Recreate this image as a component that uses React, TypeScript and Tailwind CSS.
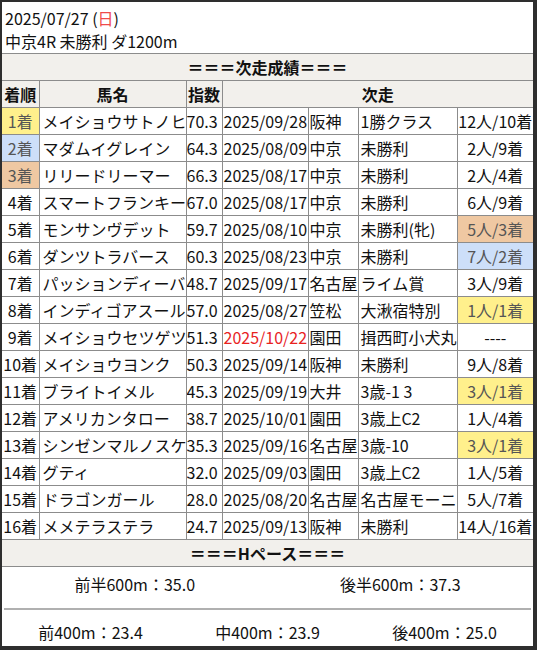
type Row = {
  rank: string;
  name: string;
  idx: string;
  date: string;
  place: string;
  race: string;
  result: string;
  rankBg?: string;
  resBg?: string;
  dateRed?: boolean;
};

const YELLOW = "bg-[#fff08c] text-[#555]";
const BLUE = "bg-[#cddff9] text-[#555]";
const ORANGE = "bg-[#efc8a2] text-[#555]";

const rows: Row[] = [
  { rank: "1着", name: "メイショウサトノヒ", idx: "70.3", date: "2025/09/28", place: "阪神", race: "1勝クラス", result: "12人/10着", rankBg: YELLOW },
  { rank: "2着", name: "マダムイグレイン", idx: "64.3", date: "2025/08/09", place: "中京", race: "未勝利", result: "2人/9着", rankBg: BLUE },
  { rank: "3着", name: "リリードリーマー", idx: "66.3", date: "2025/08/17", place: "中京", race: "未勝利", result: "2人/4着", rankBg: ORANGE },
  { rank: "4着", name: "スマートフランキー", idx: "67.0", date: "2025/08/17", place: "中京", race: "未勝利", result: "6人/9着" },
  { rank: "5着", name: "モンサンヴデット", idx: "59.7", date: "2025/08/10", place: "中京", race: "未勝利(牝)", result: "5人/3着", resBg: ORANGE },
  { rank: "6着", name: "ダンツトラバース", idx: "60.3", date: "2025/08/23", place: "中京", race: "未勝利", result: "7人/2着", resBg: BLUE },
  { rank: "7着", name: "パッションディーバ", idx: "48.7", date: "2025/09/17", place: "名古屋", race: "ライム賞", result: "3人/9着" },
  { rank: "8着", name: "インディゴアスール", idx: "57.0", date: "2025/08/27", place: "笠松", race: "大湫宿特別", result: "1人/1着", resBg: YELLOW },
  { rank: "9着", name: "メイショウセツゲツ", idx: "51.3", date: "2025/10/22", place: "園田", race: "揖西町小犬丸", result: "----", dateRed: true },
  { rank: "10着", name: "メイショウヨンク", idx: "50.3", date: "2025/09/14", place: "阪神", race: "未勝利", result: "9人/8着" },
  { rank: "11着", name: "ブライトイメル", idx: "45.3", date: "2025/09/19", place: "大井", race: "3歳-1 3", result: "3人/1着", resBg: YELLOW },
  { rank: "12着", name: "アメリカンタロー", idx: "38.7", date: "2025/10/01", place: "園田", race: "3歳上C2", result: "1人/4着" },
  { rank: "13着", name: "シンゼンマルノスケ", idx: "35.3", date: "2025/09/16", place: "名古屋", race: "3歳-10", result: "3人/1着", resBg: YELLOW },
  { rank: "14着", name: "グティ", idx: "32.0", date: "2025/09/03", place: "園田", race: "3歳上C2", result: "1人/5着" },
  { rank: "15着", name: "ドラゴンガール", idx: "28.0", date: "2025/08/20", place: "名古屋", race: "名古屋モーニ", result: "5人/7着" },
  { rank: "16着", name: "メメテラステラ", idx: "24.7", date: "2025/09/13", place: "阪神", race: "未勝利", result: "14人/16着" },
];

const cell = "border border-[#8c8c8c] h-[27px] py-0 leading-[24px] whitespace-nowrap overflow-hidden";

export default function App() {
  return (
    <div
      className="w-[537px] h-[650px] bg-[#2e2e2e] pl-[2px] pt-[2px] pr-[4px] pb-[4px] text-[16px] text-[#111]"
      style={{ fontFamily: '"Noto Sans CJK JP", "Noto Sans", sans-serif' }}
    >
      <div className="h-full bg-white flex flex-col overflow-hidden">
        <div className="pt-[5px] pl-[3px] leading-[23px] h-[51px]">
          <div>
            2025/07/27 (<span className="text-[#ef4b4b]">日</span>)
          </div>
          <div>中京4R 未勝利 ダ1200m</div>
        </div>
        <table className="w-full table-fixed border-collapse">
          <colgroup>
            <col className="w-[37px]" />
            <col className="w-[147px]" />
            <col className="w-[36px]" />
            <col className="w-[86px]" />
            <col className="w-[50px]" />
            <col className="w-[99px]" />
            <col />
          </colgroup>
          <thead>
            <tr>
              <th colSpan={7} className={`${cell} border-x-0 bg-[#f2f0ec] font-bold text-center`}>
                ＝＝＝次走成績＝＝＝
              </th>
            </tr>
            <tr className="bg-[#f2f0ec] font-bold">
              <th className={`${cell} border-l-0 text-center px-0`}>着順</th>
              <th className={`${cell} text-center`}>馬名</th>
              <th className={`${cell} text-center px-0`}>指数</th>
              <th colSpan={4} className={`${cell} border-r-0 text-center`}>次走</th>
            </tr>
          </thead>
          <tbody>
            {rows.map((r) => (
              <tr key={r.rank}>
                <td className={`${cell} border-l-0 text-center px-0 ${r.rankBg ?? ""}`}>{r.rank}</td>
                <td className={`${cell} pl-[3px] pr-0 text-left`}>{r.name}</td>
                <td className={`${cell} px-0 text-left`}>{r.idx}</td>
                <td className={`${cell} pl-[1px] pr-0 ${r.dateRed ? "text-[#e8231f]" : ""}`}>{r.date}</td>
                <td className={`${cell} pl-[1px] pr-0`}>{r.place}</td>
                <td className={`${cell} pl-[2px] pr-0`}>{r.race}</td>
                <td className={`${cell} border-r-0 text-center px-0 ${r.resBg ?? ""}`}>{r.result}</td>
              </tr>
            ))}
            <tr>
              <td colSpan={7} className={`${cell} border-x-0 bg-[#f2f0ec] font-bold text-center`}>
                ＝＝＝Hペース＝＝＝
              </td>
            </tr>
          </tbody>
        </table>
        <div className="grid grid-cols-2 h-[34px] items-center text-center leading-[24px]">
          <div>前半600m：35.0</div>
          <div>後半600m：37.3</div>
        </div>
        <div className="mt-[7px] mx-[2px] h-[2px] bg-[#b0b0b0]" />
        <div className="grid grid-cols-3 pt-[10px] text-center leading-[24px]">
          <div>前400m：23.4</div>
          <div>中400m：23.9</div>
          <div>後400m：25.0</div>
        </div>
      </div>
    </div>
  );
}
